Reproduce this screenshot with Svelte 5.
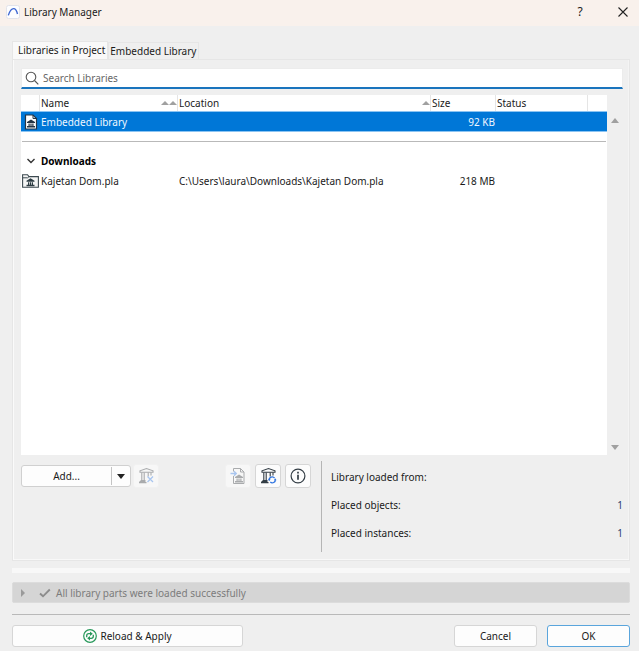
<script>
  let query = $state('');
  let tab = $state(0);
  const tabs = ['Libraries in Project', 'Embedded Library'];
  const facts = [
    ['Library loaded from:', ''],
    ['Placed objects:', '1'],
    ['Placed instances:', '1']
  ];
</script>

{#snippet temple()}
  <path d="M0 5 L8 0 L16 5 V7 H0 Z M3 8h2.4v5H3z M6.8 8h2.4v5H6.8z M10.6 8h2.4v5h-2.4z M0 13h16v3H0z" />
{/snippet}

{#snippet building()}
  <path d="M3 5.2V3.8L9.5 1.6L16 3.8V5.2Z" stroke-width="1.1" />
  <path d="M4.8 5.5v8M7.2 5.5v8M11.2 5.5v4M3.5 13.6h5M2 15.6h7.5M2.5 14.6h6" stroke-width="1.1" />
{/snippet}

<div class="window">
  <header class="titlebar">
    <svg class="logo" width="14" height="14" viewBox="0 0 14 14">
      <rect x=".5" y=".5" width="13" height="13" rx="2" fill="#fdfdff" stroke="#e2e3ea" />
      <path d="M2.3 10.4C3.6 6.4 5.4 3.6 7.6 3.6C9.8 3.6 10.8 6 11.5 9" fill="none" stroke="#3d66d2" stroke-width="1.4" />
    </svg>
    <h1>Library Manager</h1>
    <button class="caption" aria-label="Help">?</button>
    <button class="caption" aria-label="Close">
      <svg width="12" height="12" viewBox="0 0 12 12"><path d="M1.5 1.5l9 9M10.5 1.5l-9 9" stroke="#222" stroke-width="1.1" /></svg>
    </button>
  </header>

  <main>
    <div class="tabs" role="tablist">
      {#each tabs as name, i}
        <button role="tab" aria-selected={tab === i} class:active={tab === i} onclick={() => (tab = i)}>{name}</button>
      {/each}
    </div>

    <section class="panel">
      <label class="search">
        <svg width="14" height="14" viewBox="0 0 14 14" fill="none" stroke="#555" stroke-width="1.1">
          <circle cx="6" cy="6" r="4.8" /><path d="M9.5 9.5l3.8 3.8" />
        </svg>
        <input type="text" placeholder="Search Libraries" aria-label="Search Libraries" bind:value={query} />
      </label>

      <div class="list">
        <div class="sheet">
          <table>
            <colgroup>
              <col class="c-icon" /><col class="c-name" /><col /><col class="c-size" /><col class="c-status" /><col class="c-end" />
            </colgroup>
            <thead>
              <tr>
                <th></th>
                <th><span class="head">Name <span class="sort"><i></i><i></i></span></span></th>
                <th><span class="head">Location <span class="sort"><i></i></span></span></th>
                <th>Size</th>
                <th>Status</th>
                <th></th>
              </tr>
            </thead>
            <tbody>
              <tr class="selected">
                <td class="icon">
                  <svg width="14" height="16" viewBox="0 0 14 16">
                    <path d="M1.5 1h7.5l3.5 3.5V15H1.5z" fill="#fff" stroke="#253544" stroke-width="1.2" />
                    <path d="M9 1v3.5h3.5" fill="none" stroke="#253544" />
                    <g transform="translate(3 5.5) scale(.5)" fill="#253544">{@render temple()}</g>
                  </svg>
                </td>
                <td>Embedded Library</td>
                <td></td>
                <td class="num">92 KB</td>
                <td></td>
                <td></td>
              </tr>
              <tr class="rule"><td colspan="6"><hr /></td></tr>
              <tr>
                <td class="icon">
                  <svg width="10" height="8" viewBox="0 0 10 8"><path d="M1.5 2L5 5.5L8.5 2" fill="none" stroke="#333" stroke-width="1.4" /></svg>
                </td>
                <td colspan="5" class="group">Downloads</td>
              </tr>
              <tr>
                <td class="icon">
                  <svg width="17" height="14" viewBox="0 0 17 14">
                    <path d="M.6 13.3V.7H5.5L7 2.6H16.4V13.3Z" fill="#f4f5f5" stroke="#3d4a50" stroke-width="1.1" />
                    <path d="M.6 3.8H5.6L7 2.6" fill="none" stroke="#3d4a50" />
                    <g transform="translate(4.5 4.2) scale(.5)" fill="#2c3b42">{@render temple()}</g>
                  </svg>
                </td>
                <td>Kajetan Dom.pla</td>
                <td>C:\Users\laura\Downloads\Kajetan Dom.pla</td>
                <td class="num">218 MB</td>
                <td></td>
                <td></td>
              </tr>
            </tbody>
          </table>
        </div>
        <div class="scroll">
          <button aria-label="Scroll up"><i></i></button>
          <button aria-label="Scroll down"><i class="down"></i></button>
        </div>
      </div>

      <div class="lower">
        <div class="tools">
          <div class="split">
            <button class="add">Add...</button>
            <button class="more" aria-label="More add options"><i></i></button>
          </div>
          <button class="tool" disabled aria-label="Remove library">
            <svg width="18" height="18" viewBox="0 0 18 18" fill="none" stroke="#a9abad">
              {@render building()}
              <path d="M14 5.5v3" stroke-width="1.1" />
              <path d="M10.5 9.5l5.5 5.5M16 9.5l-5.5 5.5" stroke="#a8c5ef" stroke-width="1.3" />
            </svg>
          </button>
          <span class="spacer"></span>
          <button class="tool" disabled aria-label="Embed object">
            <svg width="18" height="18" viewBox="0 0 18 18" fill="none" stroke="#a9abad">
              <path d="M4.5 4.5V1.5H11.5L15 5V16.5H4.5V9" />
              <path d="M11.5 1.5V5H15" />
              <path d="M1.5 6.5H7M5 4.3L7.3 6.5L5 8.7" stroke="#a8c5ef" stroke-width="1.3" />
              <g transform="translate(6 7.5) scale(.5)" fill="#a9abad" stroke="none">{@render temple()}</g>
            </svg>
          </button>
          <button class="tool" aria-label="Reload library">
            <svg width="18" height="18" viewBox="0 0 18 18" fill="none" stroke="#333d45">
              {@render building()}
              <path d="M14 5.5v3" stroke-width="1.1" />
              <path d="M10.2 13.3a3 3 0 0 1 5.4-2.2M16.3 12.5a3 3 0 0 1-5 2.6" stroke="#2f74e0" stroke-width="1.3" />
              <path d="M9 12.2h2.6l-1.3 1.9zM15 13.2h2.6l-1.4-1.9z" fill="#2f74e0" stroke="none" />
            </svg>
          </button>
          <button class="tool" aria-label="Library information">
            <svg width="18" height="18" viewBox="0 0 18 18" fill="none" stroke="#333d45">
              <circle cx="9" cy="9" r="6.9" stroke-width="1.2" />
              <path d="M9 7.8v5M9 4.8v1.8" stroke-width="1.7" />
            </svg>
          </button>
        </div>
        <dl>
          {#each facts as [label, value]}
            <div><dt>{label}</dt><dd>{value}</dd></div>
          {/each}
        </dl>
      </div>
    </section>

    <div class="strip"></div>

    <div class="status">
      <svg width="6" height="8" viewBox="0 0 6 8"><path d="M1 0L5 4L1 8z" fill="#9a9a9a" /></svg>
      <svg width="12" height="10" viewBox="0 0 12 10"><path d="M1 5.5L4 8.3L10.8 1.5" fill="none" stroke="#8c8c8c" stroke-width="1.9" /></svg>
      <span>All library parts were loaded successfully</span>
    </div>
  </main>

  <footer>
    <button class="push reload">
      <svg width="14" height="14" viewBox="0 0 14 14" fill="none" stroke="#27985a">
        <circle cx="7" cy="7" r="6.3" stroke-width="1.2" />
        <path d="M3.7 8.2V6.8Q3.7 4.7 5.8 4.7H8M10.3 5.8V7.2Q10.3 9.3 8.2 9.3H6" stroke-width="1.3" />
        <path d="M7 2.4L9.8 4.7L7 7zM7 7L4.2 9.3L7 11.6z" fill="#27985a" stroke="none" />
      </svg>
      Reload &amp; Apply
    </button>
    <span class="spacer"></span>
    <button class="push">Cancel</button>
    <button class="push ok">OK</button>
  </footer>
</div>

<style>
  :global(body) { margin: 0; background: #efefef; }
  .window {
    min-height: 100vh;
    display: flex;
    flex-direction: column;
    background: #efefef;
    color: #1a1a1a;
    font: 10px/16px "Noto Sans", "Open Sans", sans-serif;
  }
  .window *, .window { box-sizing: border-box; }
  button { font: inherit; color: inherit; margin: 0; padding: 0; border: 0; background: none; }
  svg { display: block; flex: none; }
  i { display: block; flex: none; border: solid transparent; border-width: 0 4px 5px; border-bottom-color: #a0a0a0; }
  .spacer { flex: 1; }

  .titlebar { display: flex; align-items: center; height: 26px; padding: 0 7px 2px 6px; background: #f9f1ec; }
  h1 { flex: 1; margin: 0 0 0 4px; font-size: 10px; font-weight: 400; }
  .caption { width: 18px; height: 18px; display: grid; place-items: center; font-size: 12px; }
  .caption + .caption { margin-left: 25px; }

  main { flex: 1; display: flex; flex-direction: column; padding: 15px 9px 0 12px; }
  .tabs { display: flex; align-items: flex-end; }
  .tabs button { height: 17px; padding: 0 2px 0 1px; border: 1px solid #e6e6e6; border-bottom: 0; line-height: 16px; white-space: nowrap; }
  .tabs .active { height: 18px; padding: 0 2px 0 5px; background: #f9f9f9; line-height: 15px; }
  .panel {
    flex: 1;
    display: flex;
    flex-direction: column;
    padding: 8px 6px 8px 8px;
    border: 1px solid #e6e6e6;
    box-shadow: inset 1px 0 #fafafa, inset 0 -1px #f8f8f8, inset -1px 0 #f4f4f4;
  }
  .search { display: flex; align-items: center; height: 21px; padding-left: 3px; margin-bottom: 6px; background: #fff; border: 1px solid #ececec; border-bottom: 2px solid #1a74bd; }
  .search input { flex: 1; min-width: 0; margin: 0; padding: 0 4px; border: 0; outline: 0; background: none; font: inherit; color: inherit; }
  .search input::placeholder { color: #666; opacity: 1; }

  .list { flex: 1; display: flex; }
  .sheet { flex: 1; min-width: 0; background: #fff; }
  table { width: 100%; table-layout: fixed; border-collapse: separate; border-spacing: 0; }
  .c-icon { width: 19px; }
  .c-name { width: 138px; }
  .c-size { width: 65px; }
  .c-status { width: 92px; }
  .c-end { width: 19px; }
  th { height: 16px; padding: 0 0 0 1px; text-align: left; font-weight: 400; border-right: 1px solid #e5e5e5; }
  th:last-child { border: 0; }
  .head { display: flex; align-items: center; justify-content: space-between; }
  .sort { display: flex; }
  .sort i { border-width: 0 4px 4px; }
  td { height: 20px; padding: 0 1px; white-space: nowrap; }
  .icon { padding: 0; }
  .icon svg { margin: 0 auto; }
  .num { text-align: right; }
  .selected td { height: 21px; color: #f0f7ff; background: #0077d7; border: solid #8cc4f2; border-width: 1px 0; }
  .rule td { height: 19px; }
  hr { margin: 0; border: 0; border-top: 1px solid #b9b9b9; }
  .group { font-weight: 700; color: #000; }
  .scroll { width: 16px; display: flex; flex-direction: column; justify-content: space-between; padding-top: 17px; }
  .scroll button { width: 16px; height: 16px; display: grid; place-items: center; }
  .down { transform: rotate(180deg); }

  .lower { display: flex; padding-top: 6px; }
  .tools { flex: 1; display: flex; align-items: flex-start; padding: 3px 10px 0 0; }
  .split { display: flex; width: 110px; height: 22px; margin: 1px 2px 0 0; background: #fdfdfd; border: 1px solid #d0d0d0; border-radius: 3px; }
  .add { flex: 1; }
  .more { width: 19px; margin: 1px 0; border-left: 1px solid #c4c4c4; display: grid; place-items: center; }
  .more i { border-width: 5px 4px 0; border-top-color: #222; }
  .tool { width: 26px; height: 24px; display: grid; place-items: center; background: #fcfcfc; border: 1px solid #d6d6d6; border-radius: 3px; }
  .tool + .tool { margin-left: 4px; }
  .tool:disabled { background: #f7f7f7; border-color: #f1f1f1; }
  dl { width: 302px; height: 91px; margin: 0; padding: 8px 0 0 9px; border-left: 1px solid #b5b5b5; }
  dl div { display: flex; justify-content: space-between; margin-bottom: 12px; }
  dl div:last-child { margin: 0; }
  dd { margin: 0; color: #2d3d6b; }

  .strip { height: 5px; margin: 7px 0 9px; background: #f8f8f8; }
  .status { display: flex; align-items: center; height: 21px; padding-left: 7px; background: #d5d5d5; border: 1px solid #dcdcdc; border-radius: 2px; color: #7c7c7c; }
  .status svg + svg { margin: 0 5px 0 13px; }

  footer { display: flex; margin: 11px 9px 0 12px; padding: 10px 0 4px; border-top: 1px solid #b9b9b9; }
  .push { width: 83px; height: 22px; background: #fdfdfd; border: 1px solid #d6d6d6; border-radius: 3px; }
  .push + .push { margin-left: 10px; }
  .reload { width: 231px; display: flex; align-items: center; justify-content: center; gap: 3px; }
  .ok { border-color: #5aa5dc; }
</style>
